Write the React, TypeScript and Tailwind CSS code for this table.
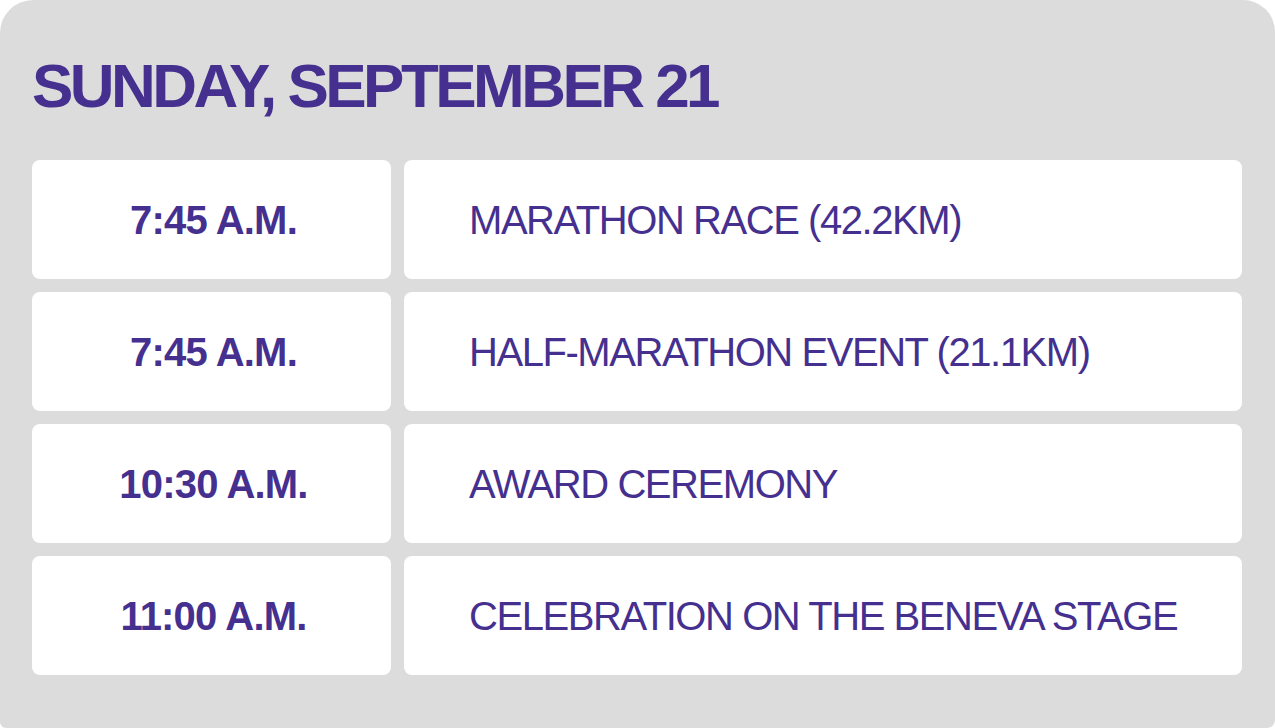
const rows = [
  { time: "7:45 A.M.", label: "MARATHON RACE (42.2KM)" },
  { time: "7:45 A.M.", label: "HALF-MARATHON EVENT (21.1KM)" },
  { time: "10:30 A.M.", label: "AWARD CEREMONY" },
  { time: "11:00 A.M.", label: "CELEBRATION ON THE BENEVA STAGE" },
];

export default function App() {
  return (
    <div className="w-[1275px] h-[728px] bg-white font-['Liberation_Sans',Arial,sans-serif] text-[#45308f]">
      <div className="h-full w-full bg-[#dcdcdc] rounded-tl-[33px] rounded-tr-[32px] rounded-bl-[6px] rounded-br-[8px] pl-[32px] pr-[33px] pt-[55px]">
        {/* Heading */}
        <h1 className="text-[62px] leading-none font-bold tracking-[-0.057em] whitespace-nowrap">
          SUNDAY, SEPTEMBER 21
        </h1>

        {/* Schedule */}
        <div className="mt-[43px] grid grid-cols-[359px_1fr] auto-rows-[119px] gap-[13px]">
          {rows.map((r, i) => (
            <div key={i} className="contents">
              <div className="bg-white rounded-[8px] flex items-center justify-center pl-[4px]">
                <span className="text-[40px] leading-none font-bold tracking-[-0.02em] whitespace-nowrap">{r.time}</span>
              </div>
              <div className="bg-white rounded-[8px] flex items-center pl-[65px]">
                <span className="text-[40px] leading-none tracking-[-0.036em] whitespace-nowrap">{r.label}</span>
              </div>
            </div>
          ))}
        </div>
      </div>
    </div>
  );
}
